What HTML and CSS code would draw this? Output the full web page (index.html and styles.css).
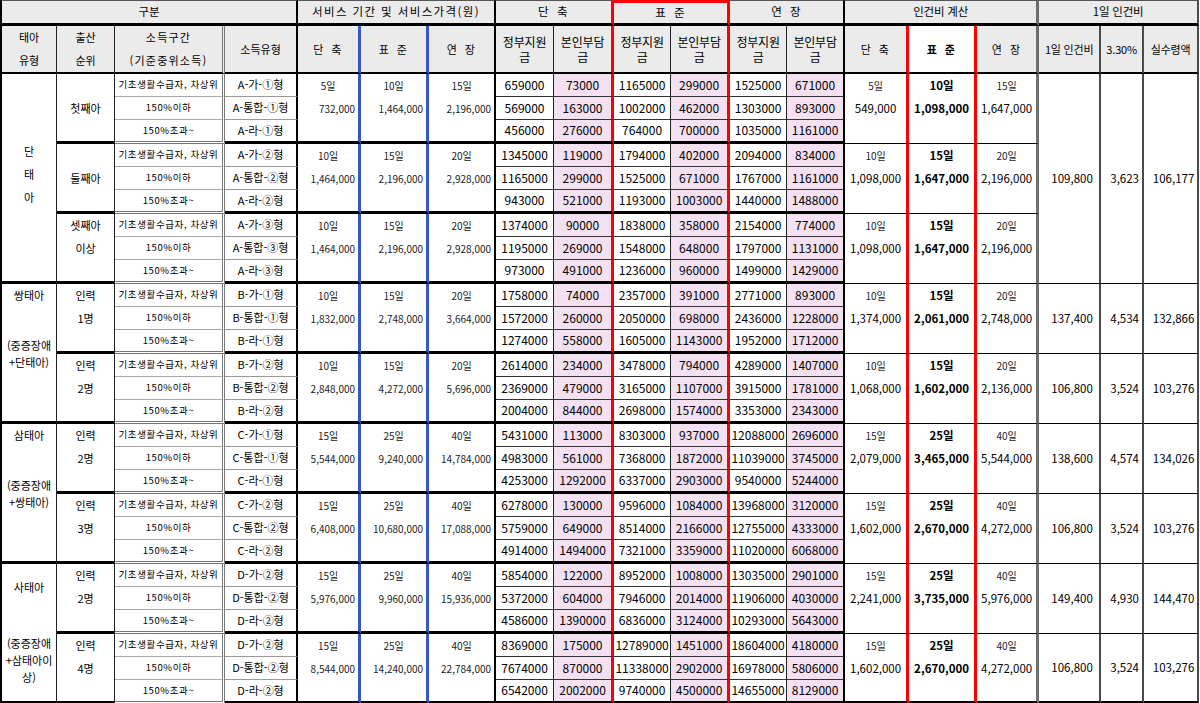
FILE: index.html
```html
<!DOCTYPE html>
<html lang="ko">
<head>
<meta charset="utf-8">
<title>서비스 가격표</title>
<link rel="stylesheet" href="styles.css">
</head>
<body>
<table class="sheet">
<colgroup>
<col class="w55"><col class="w58"><col class="w110"><col class="w73">
<col class="w63"><col class="w68"><col class="w67">
<col class="w58"><col class="w60"><col class="w57"><col class="w59"><col class="w57"><col class="w58">
<col class="w64"><col class="w68"><col class="w62">
<col class="w62"><col class="w43"><col class="w55">
</colgroup>
<tbody>
<tr class="h1">
  <td class="hd top1 bk2" colspan="4">구분</td>
  <td class="hd top1 bk2 wide" colspan="3">서비스 기간 및 서비스가격(원)</td>
  <td class="hd top1 rd sp" colspan="2">단 축</td>
  <td class="hd topr rd sp" colspan="2">표 준</td>
  <td class="hd top1 bk2 sp" colspan="2">연 장</td>
  <td class="hd top1 gy3 mg" colspan="3">인건비 계산</td>
  <td class="hd top1 dg2 mg" colspan="3">1일 인건비</td>
</tr>
<tr class="h2">
  <td class="hd2 bk1">태아<br>유형</td>
  <td class="hd2 bk1">출산<br>순위</td>
  <td class="hd2 dbl ls">소득구간<br>(기준중위소득)</td>
  <td class="hd2 bk2">소득유형</td>
  <td class="hd2 bl sp">단 축</td>
  <td class="hd2 bl sp">표 준</td>
  <td class="hd2 bk2 sp">연 장</td>
  <td class="hd2 mh bk1">정부지원<br>금</td>
  <td class="hd2 mh rd">본인부담<br>금</td>
  <td class="hd2 mh bk1">정부지원<br>금</td>
  <td class="hd2 mh rd">본인부담<br>금</td>
  <td class="hd2 mh bk1">정부지원<br>금</td>
  <td class="hd2 mh bk2">본인부담<br>금</td>
  <td class="hd2 rd sp">단 축</td>
  <td class="hd2 white rd sp strong">표 준</td>
  <td class="hd2 gy3 sp">연 장</td>
  <td class="hd2 mg dg2">1일 인건비</td>
  <td class="hd2 mg dg2">3.30%</td>
  <td class="hd2 mg dg2">실수령액</td>
</tr>

<!-- 단태아 첫째아 -->
<tr class="r1">
  <td class="ty bk1" rowspan="9"><div class="vt">단</div><div class="vt">태</div><div class="vt">아</div></td>
  <td class="od mid bk1" rowspan="3"><div>첫째아</div></td>
  <td class="ic dbl">기초생활수급자, 차상위</td>
  <td class="tp bk2">A-가-①형</td>
  <td class="svc bl" rowspan="3"><div>5일</div><div class="amt">732,000</div></td>
  <td class="svc bl" rowspan="3"><div>10일</div><div class="amt">1,464,000</div></td>
  <td class="svc bk2" rowspan="3"><div>15일</div><div class="amt">2,196,000</div></td>
  <td class="mon bk1">659000</td><td class="mon pk rd">73000</td>
  <td class="mon bk1">1165000</td><td class="mon pk rd">299000</td>
  <td class="mon bk1">1525000</td><td class="mon pk bk2">671000</td>
  <td class="lab rd" rowspan="3"><div class="dy">5일</div><div>549,000</div></td>
  <td class="lab std rd" rowspan="3"><div>10일</div><div>1,098,000</div></td>
  <td class="lab gy3" rowspan="3"><div class="dy">15일</div><div>1,647,000</div></td>
  <td class="day dg2" rowspan="9">109,800</td>
  <td class="day dg2" rowspan="9">3,623</td>
  <td class="day dg2" rowspan="9">106,177</td>
</tr>
<tr class="r2">
  <td class="ic dbl">150%이하</td>
  <td class="tp bk2">A-통합-①형</td>
  <td class="mon bk1">569000</td><td class="mon pk rd">163000</td>
  <td class="mon bk1">1002000</td><td class="mon pk rd">462000</td>
  <td class="mon bk1">1303000</td><td class="mon pk bk2">893000</td>
</tr>
<tr class="r3">
  <td class="ic dbl">150%초과~</td>
  <td class="tp bk2">A-라-①형</td>
  <td class="mon bk1">456000</td><td class="mon pk rd">276000</td>
  <td class="mon bk1">764000</td><td class="mon pk rd">700000</td>
  <td class="mon bk1">1035000</td><td class="mon pk bk2">1161000</td>
</tr>

<!-- 단태아 둘째아 -->
<tr class="r1">
  <td class="od mid bk1" rowspan="3"><div>둘째아</div></td>
  <td class="ic dbl">기초생활수급자, 차상위</td>
  <td class="tp bk2">A-가-②형</td>
  <td class="svc bl" rowspan="3"><div>10일</div><div class="amt">1,464,000</div></td>
  <td class="svc bl" rowspan="3"><div>15일</div><div class="amt">2,196,000</div></td>
  <td class="svc bk2" rowspan="3"><div>20일</div><div class="amt">2,928,000</div></td>
  <td class="mon bk1">1345000</td><td class="mon pk rd">119000</td>
  <td class="mon bk1">1794000</td><td class="mon pk rd">402000</td>
  <td class="mon bk1">2094000</td><td class="mon pk bk2">834000</td>
  <td class="lab rd" rowspan="3"><div class="dy">10일</div><div>1,098,000</div></td>
  <td class="lab std rd" rowspan="3"><div>15일</div><div>1,647,000</div></td>
  <td class="lab gy3" rowspan="3"><div class="dy">20일</div><div>2,196,000</div></td>
</tr>
<tr class="r2">
  <td class="ic dbl">150%이하</td>
  <td class="tp bk2">A-통합-②형</td>
  <td class="mon bk1">1165000</td><td class="mon pk rd">299000</td>
  <td class="mon bk1">1525000</td><td class="mon pk rd">671000</td>
  <td class="mon bk1">1767000</td><td class="mon pk bk2">1161000</td>
</tr>
<tr class="r3">
  <td class="ic dbl">150%초과~</td>
  <td class="tp bk2">A-라-②형</td>
  <td class="mon bk1">943000</td><td class="mon pk rd">521000</td>
  <td class="mon bk1">1193000</td><td class="mon pk rd">1003000</td>
  <td class="mon bk1">1440000</td><td class="mon pk bk2">1488000</td>
</tr>

<!-- 단태아 셋째아 이상 -->
<tr class="r1">
  <td class="od top bk1" rowspan="3"><div>셋째아</div><div>이상</div></td>
  <td class="ic dbl">기초생활수급자, 차상위</td>
  <td class="tp bk2">A-가-③형</td>
  <td class="svc bl" rowspan="3"><div>10일</div><div class="amt">1,464,000</div></td>
  <td class="svc bl" rowspan="3"><div>15일</div><div class="amt">2,196,000</div></td>
  <td class="svc bk2" rowspan="3"><div>20일</div><div class="amt">2,928,000</div></td>
  <td class="mon bk1">1374000</td><td class="mon pk rd">90000</td>
  <td class="mon bk1">1838000</td><td class="mon pk rd">358000</td>
  <td class="mon bk1">2154000</td><td class="mon pk bk2">774000</td>
  <td class="lab rd" rowspan="3"><div class="dy">10일</div><div>1,098,000</div></td>
  <td class="lab std rd" rowspan="3"><div>15일</div><div>1,647,000</div></td>
  <td class="lab gy3" rowspan="3"><div class="dy">20일</div><div>2,196,000</div></td>
</tr>
<tr class="r2">
  <td class="ic dbl">150%이하</td>
  <td class="tp bk2">A-통합-③형</td>
  <td class="mon bk1">1195000</td><td class="mon pk rd">269000</td>
  <td class="mon bk1">1548000</td><td class="mon pk rd">648000</td>
  <td class="mon bk1">1797000</td><td class="mon pk bk2">1131000</td>
</tr>
<tr class="r3">
  <td class="ic dbl">150%초과~</td>
  <td class="tp bk2">A-라-③형</td>
  <td class="mon bk1">973000</td><td class="mon pk rd">491000</td>
  <td class="mon bk1">1236000</td><td class="mon pk rd">960000</td>
  <td class="mon bk1">1499000</td><td class="mon pk bk2">1429000</td>
</tr>

<!-- 쌍태아 인력 1명 -->
<tr class="r1">
  <td class="ty tt bk1" rowspan="6"><div class="t1">쌍태아</div><div class="t2">(중증장애<br>+단태아)</div></td>
  <td class="od top bk1" rowspan="3"><div>인력</div><div>1명</div></td>
  <td class="ic dbl">기초생활수급자, 차상위</td>
  <td class="tp bk2">B-가-①형</td>
  <td class="svc bl" rowspan="3"><div>10일</div><div class="amt">1,832,000</div></td>
  <td class="svc bl" rowspan="3"><div>15일</div><div class="amt">2,748,000</div></td>
  <td class="svc bk2" rowspan="3"><div>20일</div><div class="amt">3,664,000</div></td>
  <td class="mon bk1">1758000</td><td class="mon pk rd">74000</td>
  <td class="mon bk1">2357000</td><td class="mon pk rd">391000</td>
  <td class="mon bk1">2771000</td><td class="mon pk bk2">893000</td>
  <td class="lab rd" rowspan="3"><div class="dy">10일</div><div>1,374,000</div></td>
  <td class="lab std rd" rowspan="3"><div>15일</div><div>2,061,000</div></td>
  <td class="lab gy3" rowspan="3"><div class="dy">20일</div><div>2,748,000</div></td>
  <td class="day dg2" rowspan="3">137,400</td>
  <td class="day dg2" rowspan="3">4,534</td>
  <td class="day dg2" rowspan="3">132,866</td>
</tr>
<tr class="r2">
  <td class="ic dbl">150%이하</td>
  <td class="tp bk2">B-통합-①형</td>
  <td class="mon bk1">1572000</td><td class="mon pk rd">260000</td>
  <td class="mon bk1">2050000</td><td class="mon pk rd">698000</td>
  <td class="mon bk1">2436000</td><td class="mon pk bk2">1228000</td>
</tr>
<tr class="r3">
  <td class="ic dbl">150%초과~</td>
  <td class="tp bk2">B-라-①형</td>
  <td class="mon bk1">1274000</td><td class="mon pk rd">558000</td>
  <td class="mon bk1">1605000</td><td class="mon pk rd">1143000</td>
  <td class="mon bk1">1952000</td><td class="mon pk bk2">1712000</td>
</tr>

<!-- 쌍태아 인력 2명 -->
<tr class="r1">
  <td class="od top bk1" rowspan="3"><div>인력</div><div>2명</div></td>
  <td class="ic dbl">기초생활수급자, 차상위</td>
  <td class="tp bk2">B-가-②형</td>
  <td class="svc bl" rowspan="3"><div>10일</div><div class="amt">2,848,000</div></td>
  <td class="svc bl" rowspan="3"><div>15일</div><div class="amt">4,272,000</div></td>
  <td class="svc bk2" rowspan="3"><div>20일</div><div class="amt">5,696,000</div></td>
  <td class="mon bk1">2614000</td><td class="mon pk rd">234000</td>
  <td class="mon bk1">3478000</td><td class="mon pk rd">794000</td>
  <td class="mon bk1">4289000</td><td class="mon pk bk2">1407000</td>
  <td class="lab rd" rowspan="3"><div class="dy">10일</div><div>1,068,000</div></td>
  <td class="lab std rd" rowspan="3"><div>15일</div><div>1,602,000</div></td>
  <td class="lab gy3" rowspan="3"><div class="dy">20일</div><div>2,136,000</div></td>
  <td class="day dg2" rowspan="3">106,800</td>
  <td class="day dg2" rowspan="3">3,524</td>
  <td class="day dg2" rowspan="3">103,276</td>
</tr>
<tr class="r2">
  <td class="ic dbl">150%이하</td>
  <td class="tp bk2">B-통합-②형</td>
  <td class="mon bk1">2369000</td><td class="mon pk rd">479000</td>
  <td class="mon bk1">3165000</td><td class="mon pk rd">1107000</td>
  <td class="mon bk1">3915000</td><td class="mon pk bk2">1781000</td>
</tr>
<tr class="r3">
  <td class="ic dbl">150%초과~</td>
  <td class="tp bk2">B-라-②형</td>
  <td class="mon bk1">2004000</td><td class="mon pk rd">844000</td>
  <td class="mon bk1">2698000</td><td class="mon pk rd">1574000</td>
  <td class="mon bk1">3353000</td><td class="mon pk bk2">2343000</td>
</tr>

<!-- 삼태아 인력 2명 -->
<tr class="r1">
  <td class="ty tt bk1" rowspan="6"><div class="t1">삼태아</div><div class="t2">(중증장애<br>+쌍태아)</div></td>
  <td class="od top bk1" rowspan="3"><div>인력</div><div>2명</div></td>
  <td class="ic dbl">기초생활수급자, 차상위</td>
  <td class="tp bk2">C-가-①형</td>
  <td class="svc bl" rowspan="3"><div>15일</div><div class="amt">5,544,000</div></td>
  <td class="svc bl" rowspan="3"><div>25일</div><div class="amt">9,240,000</div></td>
  <td class="svc bk2" rowspan="3"><div>40일</div><div class="amt">14,784,000</div></td>
  <td class="mon bk1">5431000</td><td class="mon pk rd">113000</td>
  <td class="mon bk1">8303000</td><td class="mon pk rd">937000</td>
  <td class="mon bk1">12088000</td><td class="mon pk bk2">2696000</td>
  <td class="lab rd" rowspan="3"><div class="dy">15일</div><div>2,079,000</div></td>
  <td class="lab std rd" rowspan="3"><div>25일</div><div>3,465,000</div></td>
  <td class="lab gy3" rowspan="3"><div class="dy">40일</div><div>5,544,000</div></td>
  <td class="day dg2" rowspan="3">138,600</td>
  <td class="day dg2" rowspan="3">4,574</td>
  <td class="day dg2" rowspan="3">134,026</td>
</tr>
<tr class="r2">
  <td class="ic dbl">150%이하</td>
  <td class="tp bk2">C-통합-①형</td>
  <td class="mon bk1">4983000</td><td class="mon pk rd">561000</td>
  <td class="mon bk1">7368000</td><td class="mon pk rd">1872000</td>
  <td class="mon bk1">11039000</td><td class="mon pk bk2">3745000</td>
</tr>
<tr class="r3">
  <td class="ic dbl">150%초과~</td>
  <td class="tp bk2">C-라-①형</td>
  <td class="mon bk1">4253000</td><td class="mon pk rd">1292000</td>
  <td class="mon bk1">6337000</td><td class="mon pk rd">2903000</td>
  <td class="mon bk1">9540000</td><td class="mon pk bk2">5244000</td>
</tr>

<!-- 삼태아 인력 3명 -->
<tr class="r1">
  <td class="od top bk1" rowspan="3"><div>인력</div><div>3명</div></td>
  <td class="ic dbl">기초생활수급자, 차상위</td>
  <td class="tp bk2">C-가-②형</td>
  <td class="svc bl" rowspan="3"><div>15일</div><div class="amt">6,408,000</div></td>
  <td class="svc bl" rowspan="3"><div>25일</div><div class="amt">10,680,000</div></td>
  <td class="svc bk2" rowspan="3"><div>40일</div><div class="amt">17,088,000</div></td>
  <td class="mon bk1">6278000</td><td class="mon pk rd">130000</td>
  <td class="mon bk1">9596000</td><td class="mon pk rd">1084000</td>
  <td class="mon bk1">13968000</td><td class="mon pk bk2">3120000</td>
  <td class="lab rd" rowspan="3"><div class="dy">15일</div><div>1,602,000</div></td>
  <td class="lab std rd" rowspan="3"><div>25일</div><div>2,670,000</div></td>
  <td class="lab gy3" rowspan="3"><div class="dy">40일</div><div>4,272,000</div></td>
  <td class="day dg2" rowspan="3">106,800</td>
  <td class="day dg2" rowspan="3">3,524</td>
  <td class="day dg2" rowspan="3">103,276</td>
</tr>
<tr class="r2">
  <td class="ic dbl">150%이하</td>
  <td class="tp bk2">C-통합-②형</td>
  <td class="mon bk1">5759000</td><td class="mon pk rd">649000</td>
  <td class="mon bk1">8514000</td><td class="mon pk rd">2166000</td>
  <td class="mon bk1">12755000</td><td class="mon pk bk2">4333000</td>
</tr>
<tr class="r3">
  <td class="ic dbl">150%초과~</td>
  <td class="tp bk2">C-라-②형</td>
  <td class="mon bk1">4914000</td><td class="mon pk rd">1494000</td>
  <td class="mon bk1">7321000</td><td class="mon pk rd">3359000</td>
  <td class="mon bk1">11020000</td><td class="mon pk bk2">6068000</td>
</tr>

<!-- 사태아 인력 2명 -->
<tr class="r1">
  <td class="ty tt t4 bk1" rowspan="6"><div class="t1">사태아</div><div class="t2">(중증장애<br>+삼태아이<br>상)</div></td>
  <td class="od top bk1" rowspan="3"><div>인력</div><div>2명</div></td>
  <td class="ic dbl">기초생활수급자, 차상위</td>
  <td class="tp bk2">D-가-②형</td>
  <td class="svc bl" rowspan="3"><div>15일</div><div class="amt">5,976,000</div></td>
  <td class="svc bl" rowspan="3"><div>25일</div><div class="amt">9,960,000</div></td>
  <td class="svc bk2" rowspan="3"><div>40일</div><div class="amt">15,936,000</div></td>
  <td class="mon bk1">5854000</td><td class="mon pk rd">122000</td>
  <td class="mon bk1">8952000</td><td class="mon pk rd">1008000</td>
  <td class="mon bk1">13035000</td><td class="mon pk bk2">2901000</td>
  <td class="lab rd" rowspan="3"><div class="dy">15일</div><div>2,241,000</div></td>
  <td class="lab std rd" rowspan="3"><div>25일</div><div>3,735,000</div></td>
  <td class="lab gy3" rowspan="3"><div class="dy">40일</div><div>5,976,000</div></td>
  <td class="day dg2" rowspan="3">149,400</td>
  <td class="day dg2" rowspan="3">4,930</td>
  <td class="day dg2" rowspan="3">144,470</td>
</tr>
<tr class="r2">
  <td class="ic dbl">150%이하</td>
  <td class="tp bk2">D-통합-②형</td>
  <td class="mon bk1">5372000</td><td class="mon pk rd">604000</td>
  <td class="mon bk1">7946000</td><td class="mon pk rd">2014000</td>
  <td class="mon bk1">11906000</td><td class="mon pk bk2">4030000</td>
</tr>
<tr class="r3">
  <td class="ic dbl">150%초과~</td>
  <td class="tp bk2">D-라-②형</td>
  <td class="mon bk1">4586000</td><td class="mon pk rd">1390000</td>
  <td class="mon bk1">6836000</td><td class="mon pk rd">3124000</td>
  <td class="mon bk1">10293000</td><td class="mon pk bk2">5643000</td>
</tr>

<!-- 사태아 인력 4명 -->
<tr class="r1">
  <td class="od top bk1" rowspan="3"><div>인력</div><div>4명</div></td>
  <td class="ic dbl">기초생활수급자, 차상위</td>
  <td class="tp bk2">D-가-②형</td>
  <td class="svc bl" rowspan="3"><div>15일</div><div class="amt">8,544,000</div></td>
  <td class="svc bl" rowspan="3"><div>25일</div><div class="amt">14,240,000</div></td>
  <td class="svc bk2" rowspan="3"><div>40일</div><div class="amt">22,784,000</div></td>
  <td class="mon bk1">8369000</td><td class="mon pk rd">175000</td>
  <td class="mon bk1">12789000</td><td class="mon pk rd">1451000</td>
  <td class="mon bk1">18604000</td><td class="mon pk bk2">4180000</td>
  <td class="lab rd end" rowspan="3"><div class="dy">15일</div><div>1,602,000</div></td>
  <td class="lab std rd end" rowspan="3"><div>25일</div><div>2,670,000</div></td>
  <td class="lab gy3 end" rowspan="3"><div class="dy">40일</div><div>4,272,000</div></td>
  <td class="day dg2 end" rowspan="3">106,800</td>
  <td class="day dg2 end" rowspan="3">3,524</td>
  <td class="day dg2 end" rowspan="3">103,276</td>
</tr>
<tr class="r2">
  <td class="ic dbl">150%이하</td>
  <td class="tp bk2">D-통합-②형</td>
  <td class="mon bk1">7674000</td><td class="mon pk rd">870000</td>
  <td class="mon bk1">11338000</td><td class="mon pk rd">2902000</td>
  <td class="mon bk1">16978000</td><td class="mon pk bk2">5806000</td>
</tr>
<tr class="r3">
  <td class="ic dbl">150%초과~</td>
  <td class="tp bk2">D-라-②형</td>
  <td class="mon bk1">6542000</td><td class="mon pk rd">2002000</td>
  <td class="mon bk1">9740000</td><td class="mon pk rd">4500000</td>
  <td class="mon bk1">14655000</td><td class="mon pk bk2">8129000</td>
</tr>
</tbody>
</table>
</body>
</html>
```

FILE: styles.css
```css
* { box-sizing: border-box; }

body {
  margin: 0;
  background: #fff;
  color: #000;
  font-family: "Noto Sans CJK KR", "Noto Sans", sans-serif;
}

.sheet {
  border-collapse: separate;
  border-spacing: 0;
  table-layout: fixed;
  width: 1199px;
  border-left: 2px solid #000;
}

td {
  padding: 0;
  text-align: center;
  vertical-align: middle;
  white-space: nowrap;
  overflow: hidden;
  font-weight: normal;
  line-height: 1.2;
}

/* column widths */
.w43 { width: 43px; }
.w55 { width: 55px; }
.w57 { width: 57px; }
.w58 { width: 58px; }
.w59 { width: 59px; }
.w60 { width: 60px; }
.w62 { width: 62px; }
.w63 { width: 63px; }
.w64 { width: 64px; }
.w67 { width: 67px; }
.w68 { width: 68px; }
.w73 { width: 73px; }
.w110 { width: 110px; }

/* row heights */
.h1 { height: 26px; }
.h2 { height: 46px; }
.r1 { height: 23px; }
.r2 { height: 23px; }
.r3 { height: 24px; }

/* right edges */
.bk1 { border-right: 1px solid #222; }
.bk2 { border-right: 2px solid #000; }
.bl { border-right: 3px solid #3656c8; }
.rd { border-right: 3px solid #ff0000; }
.gy3 { border-right: 3px solid #6e6e6e; }
.dg2 { border-right: 2px solid #4a4a4a; }
.dbl { border-right: 3px double #7a7a7a; }

/* header rows */
.hd {
  background: #ebebeb;
  font-size: 11.5px;
  border-bottom: 3px solid #000;
}
.top1 { border-top: 1px solid #555; }
.topr { border-top: 3px solid #ff0000; }
.wide { letter-spacing: 1.4px; }
.sp { letter-spacing: 1.5px; word-spacing: 2px; }
.mg { letter-spacing: -0.2px; }

.hd2 {
  background: #ebebeb;
  font-size: 11px;
  line-height: 23px;
  border-bottom: 2px solid #000;
}
.hd2.ls { letter-spacing: 1.2px; }
.hd2.mh {
  font-size: 12px;
  line-height: 15px;
  letter-spacing: -0.2px;
}
.hd2.white { background: #fff; }
.hd2.strong { font-weight: bold; }

/* data cells */
.ty {
  font-size: 11px;
  border-bottom: 3px solid #000;
  padding-bottom: 6px;
}
.ty .vt { line-height: 23px; }
.ty.tt { vertical-align: top; padding-bottom: 0; }
.ty .t1 { line-height: 23px; }
.ty .t2 { margin-top: 30px; line-height: 17px; }
.ty.t4 { padding-top: 12px; }
.ty.t4 .t2 { margin-top: 36px; }

.od {
  font-size: 11px;
  vertical-align: top;
  border-bottom: 3px solid #000;
}
.od div { line-height: 23px; }
.od.mid { padding-top: 23px; }

.ic {
  font-size: 9.5px;
  letter-spacing: 0.6px;
  border-bottom: 1px solid #a8a8a8;
}
.r3 .ic { border-bottom: 3px double #777; }

.tp {
  font-size: 11px;
  border-bottom: 1px solid #999;
}
.r3 .tp { border-bottom: 3px solid #000; }

.svc {
  font-size: 10px;
  color: #222;
  vertical-align: top;
  border-bottom: 3px solid #000;
}
.svc div { line-height: 23px; }
.svc .amt { text-align: right; padding-right: 3px; }

.mon {
  font-size: 12px;
  border-bottom: 1px solid #333;
}
.r3 .mon { border-bottom: 3px solid #000; }
.pk { background: #f3e0f0; }

.lab {
  font-size: 11.5px;
  vertical-align: top;
  border-bottom: 1px solid #000;
}
.lab div { line-height: 23px; }
.lab .dy { font-size: 10px; color: #222; }
.lab.std { font-weight: bold; }

.day {
  font-size: 11.5px;
  padding-left: 6px;
  border-bottom: 1px solid #000;
}

.end { border-bottom: 3px solid #000; }
```
